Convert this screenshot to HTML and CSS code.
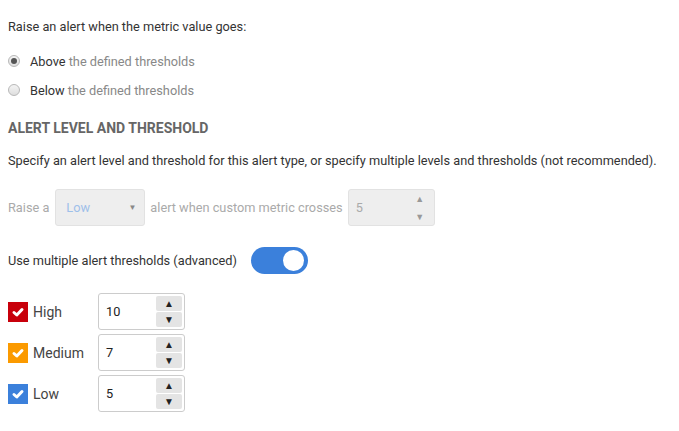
FILE: index.html
```html
<!DOCTYPE html>
<html>
<head>
<meta charset="utf-8">
<link rel="stylesheet" href="styles.css">
</head>
<body>
<div class="page">
  <p class="intro">Raise an alert when the metric value goes:</p>
  <div class="radios">
    <label class="radio"><span class="dot on"></span><span class="dark">Above</span>&nbsp;<span class="muted">the defined thresholds</span></label>
    <label class="radio"><span class="dot"></span><span class="dark">Below</span>&nbsp;<span class="muted">the defined thresholds</span></label>
  </div>
  <h3 class="heading">ALERT LEVEL AND THRESHOLD</h3>
  <p class="desc">Specify an alert level and threshold for this alert type, or specify multiple levels and thresholds (not recommended).</p>
  <div class="single">
    <span class="grey">Raise a</span>
    <div class="select"><span class="sel-val">Low</span><span class="caret">▼</span></div>
    <span class="grey">alert when custom metric crosses</span>
    <div class="num disabled"><span class="num-val">5</span><span class="arrows"><span>▲</span><span>▼</span></span></div>
  </div>
  <div class="toggle-row">
    <span>Use multiple alert thresholds (advanced)</span>
    <span class="toggle"><span class="knob"></span></span>
  </div>
  <div class="levels">
    <div class="level">
      <span class="check red"><svg viewBox="0 0 20 20"><path d="M6 10.5 L8.8 13 L14 7.5" fill="none" stroke="#fff" stroke-width="3" stroke-linecap="round" stroke-linejoin="round"/></svg></span>
      <span class="lname">High</span>
      <div class="num"><span class="num-val">10</span><span class="spin"><span class="b">▲</span><span class="b">▼</span></span></div>
    </div>
    <div class="level">
      <span class="check orange"><svg viewBox="0 0 20 20"><path d="M6 10.5 L8.8 13 L14 7.5" fill="none" stroke="#fff" stroke-width="3" stroke-linecap="round" stroke-linejoin="round"/></svg></span>
      <span class="lname">Medium</span>
      <div class="num"><span class="num-val">7</span><span class="spin"><span class="b">▲</span><span class="b">▼</span></span></div>
    </div>
    <div class="level">
      <span class="check blue"><svg viewBox="0 0 20 20"><path d="M6 10.5 L8.8 13 L14 7.5" fill="none" stroke="#fff" stroke-width="3" stroke-linecap="round" stroke-linejoin="round"/></svg></span>
      <span class="lname">Low</span>
      <div class="num"><span class="num-val">5</span><span class="spin"><span class="b">▲</span><span class="b">▼</span></span></div>
    </div>
  </div>
</div>
</body>
</html>
```
FILE: styles.css
```css
* { box-sizing: border-box; }
html, body { margin: 0; padding: 0; background: #fff; }
body { font-family: Roboto, "Liberation Sans", sans-serif; font-size: 12.75px; color: #333; }
.page { padding: 19px 8px 0 8px; }
p { margin: 0; }
.intro { line-height: 16px; height: 16px; }
.radios { margin-top: 18px; display: flex; flex-direction: column; gap: 13px; }
.radio { display: flex; align-items: center; height: 16px; }
.dot { width: 12px; height: 12px; border-radius: 50%; border: 1px solid #b8b8b8; background: linear-gradient(#f4f4f4, #dedede); margin-right: 10px; display: inline-flex; align-items: center; justify-content: center; }
.dot.on::after { content: ""; width: 6px; height: 6px; border-radius: 50%; background: #555; }
.dark { color: #333; }
.muted { color: #888; }
.heading { margin: 22px 0 0; font-size: 14px; font-weight: 700; color: #666; line-height: 16px; }
.desc { margin-top: 17px; line-height: 16px; }
.single { margin-top: 20px; display: flex; align-items: center; gap: 5px; color: #aaa; }
.grey { color: #aaa; }
.select { width: 90px; height: 37px; margin-left: 1px; background: #eee; border: 1px solid #e2e2e2; border-radius: 3px; display: flex; align-items: center; justify-content: space-between; padding: 0 8px 0 10px; }
.sel-val { color: #9ec0ea; }
.caret { font-size: 8px; color: #888; }
.num { width: 87px; height: 37px; border: 1px solid #ccc; border-radius: 3px; display: flex; align-items: stretch; background: #fff; }
.num-val { flex: 1; display: flex; align-items: center; padding-left: 7px; color: #222; }
.num.disabled { background: #eee; border-color: #e2e2e2; }
.num.disabled .num-val { color: #aaa; }
.arrows { width: 28px; display: flex; flex-direction: column; justify-content: space-between; align-items: center; padding: 4px 0 3px; font-size: 9px; color: #999; }
.toggle-row { margin-top: 21px; display: flex; align-items: center; gap: 14px; }
.toggle { width: 57px; height: 27px; border-radius: 14px; background: #3b80db; display: inline-flex; align-items: center; justify-content: flex-end; padding-right: 4px; }
.knob { width: 21px; height: 21px; border-radius: 50%; background: #fff; }
.levels { margin-top: 19px; display: flex; flex-direction: column; gap: 4px; }
.level { display: flex; align-items: center; height: 37px; }
.check { width: 20px; height: 20px; display: inline-flex; }
.check svg { width: 20px; height: 20px; }
.red { background: #c8000b; }
.orange { background: #fb9a00; }
.blue { background: #3b80db; }
.lname { width: 70px; padding-left: 5px; font-size: 14px; color: #444; }
.spin { width: 26px; display: flex; flex-direction: column; margin: 2px 2px 2px 0; }
.spin .b { flex: 1; background: #e4e4e4; display: flex; align-items: center; justify-content: center; font-size: 10px; color: #222; border-radius: 2px; }
.spin .b + .b { margin-top: 1px; }
```
